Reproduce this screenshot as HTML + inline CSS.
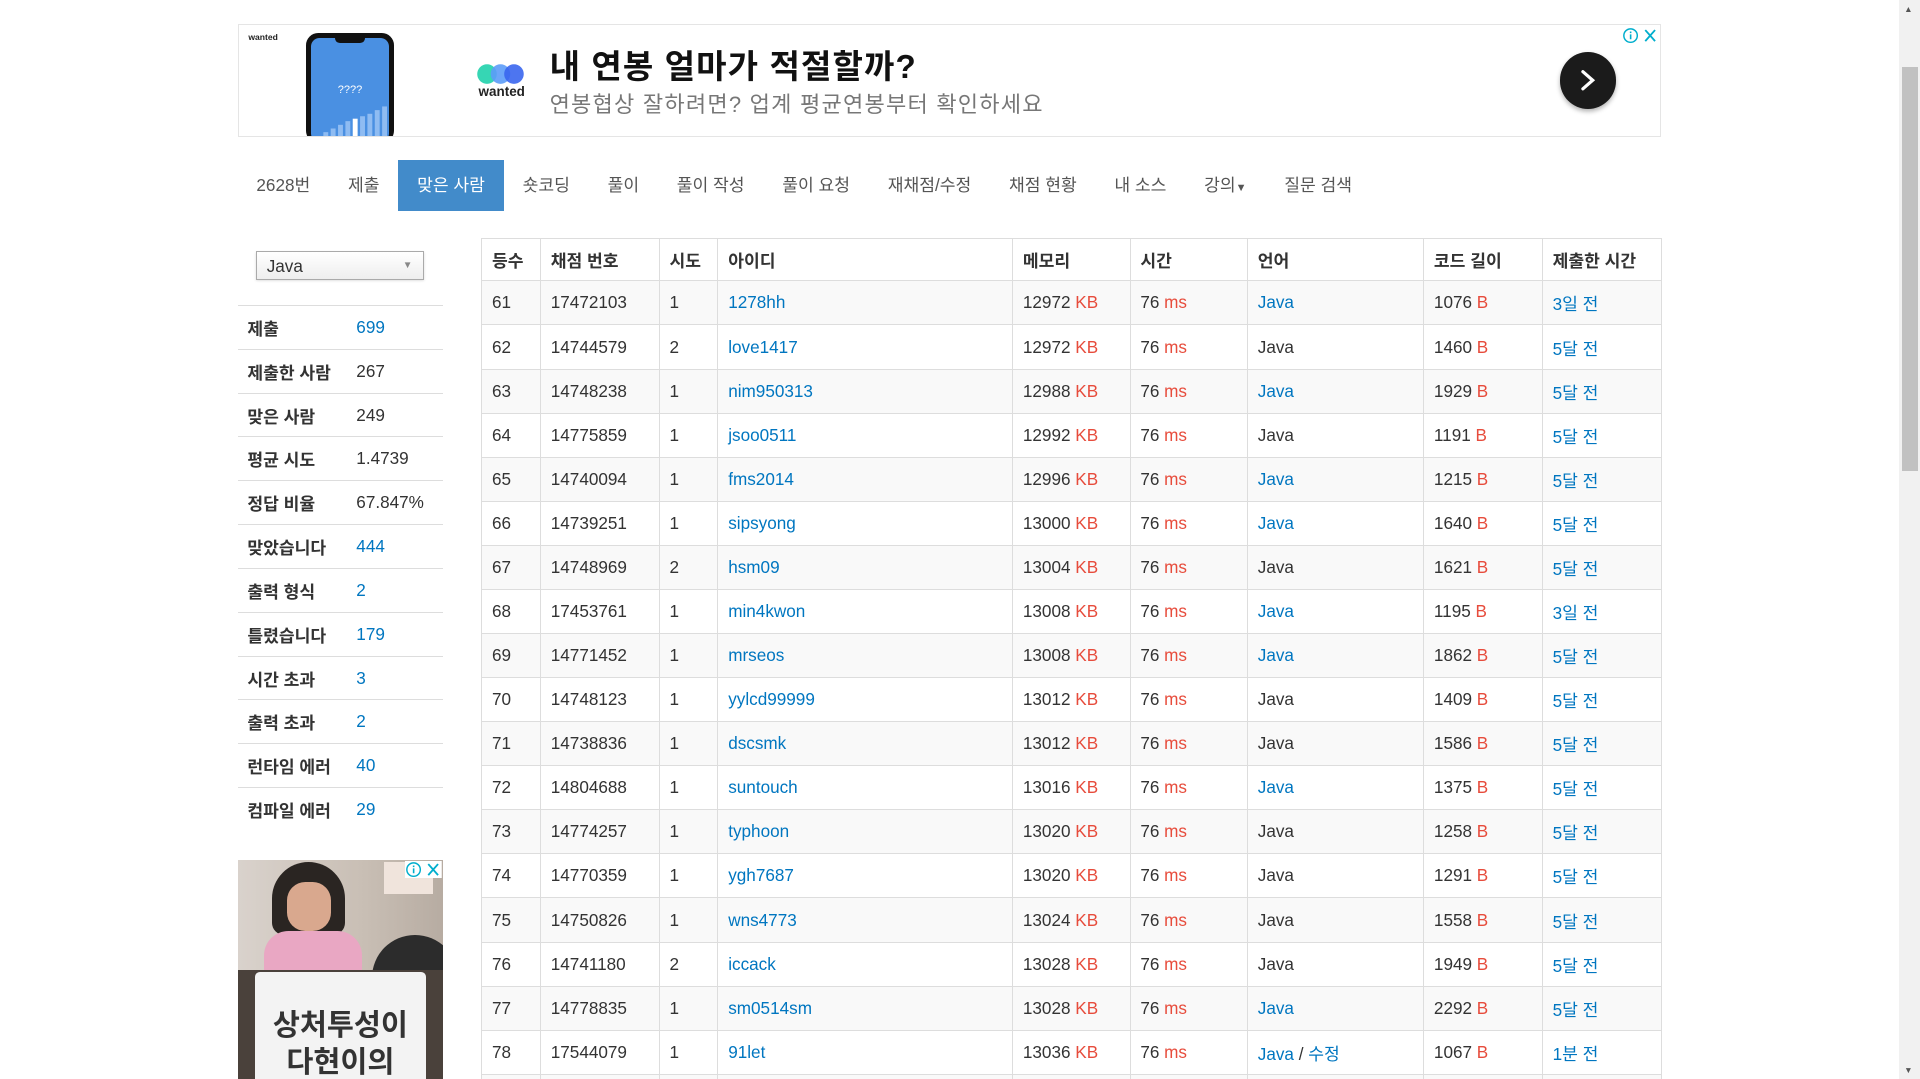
<!DOCTYPE html>
<html><head><meta charset="utf-8">
<style>
html,body{margin:0;padding:0;background:#fff;overflow:hidden;width:1920px;height:1079px}
#w{zoom:1.22449;width:1568px;height:881px;position:relative;font-family:"Liberation Sans","Noto Sans CJK KR",sans-serif;font-size:14px;color:#333}
a{color:#0076c0;text-decoration:none}
.r{color:#e74c3c}
.abs{position:absolute}
#ad{left:194px;top:20px;width:1161px;height:90px;border:1px solid #e5e5e5;background:#fff;overflow:hidden}
#nav{left:194px;top:131px;height:41px;display:flex}
#nav div{padding:0 15.4px;line-height:42px;font-size:14px;color:#555}
#nav div.act{background:#428bca;color:#fff}
#side{left:194px;top:249px;width:168px}
#side .row{height:35px;border-top:1px solid #ddd;display:flex;align-items:center}
#side .l{width:89px;padding-left:8px;font-weight:bold;color:#333}
table{border-collapse:collapse;position:absolute;left:393px;top:194px;width:964px}
td,th{border:1px solid #ddd;padding:0 8px;text-align:left;font-size:14px;white-space:nowrap}
tbody tr{height:36px}
thead tr{height:35px}
th{font-weight:bold}
tbody tr:nth-child(odd){background:#f9f9f9}
#sb{left:1551px;top:0;width:17px;height:881px;background:#f1f1f1}
</style></head><body><div id="w">
<div id="ad" class="abs">
 <div class="abs" style="left:8px;top:5px;font-size:7px;font-weight:bold;color:#222">wanted</div>
 <div class="abs" style="left:55px;top:6px;width:72px;height:90px;background:#111;border-radius:10px"></div>
 <div class="abs" style="left:59px;top:10px;width:64px;height:85px;background:#4a90e2;border-radius:7px">
  <div class="abs" style="left:20px;top:-4px;width:24px;height:8px;background:#111;border-radius:4px"></div>
  <div class="abs" style="left:22px;top:38px;color:#fff;font-size:9px">????</div>
  <svg class="abs" style="left:4px;top:54px" width="58" height="31"><g fill="#8fbcf2"><rect x="0" y="26" width="4" height="5"/><rect x="6" y="23" width="4" height="8"/><rect x="12" y="20" width="4" height="11"/><rect x="18" y="17" width="4" height="14"/><rect x="24" y="14" width="4" height="17"/><rect x="36" y="10" width="4" height="21"/><rect x="42" y="8" width="4" height="23"/><rect x="48" y="5" width="4" height="26"/><rect x="54" y="2" width="4" height="29"/></g><rect x="30" y="12" width="4" height="19" fill="#fff"/></svg>
 </div>
 <svg class="abs" style="left:194px;top:31px" width="42" height="18"><circle cx="9" cy="9" r="8" fill="#36d6b4"/><circle cx="20" cy="9" r="8" fill="#5c9cf8" opacity=".9"/><circle cx="31" cy="9" r="8" fill="#3a66ee" opacity=".9"/></svg>
 <div class="abs" style="left:196px;top:48px;font-size:11px;font-weight:bold;color:#222">wanted</div>
 <div class="abs" style="left:254px;top:12px;font-size:27px;font-weight:bold;color:#111;letter-spacing:0.9px">내 연봉 얼마가 적절할까?</div>
 <div class="abs" style="left:254px;top:50px;font-size:18px;color:#777;letter-spacing:1px">연봉협상 잘하려면? 업계 평균연봉부터 확인하세요</div>
 <div class="abs" style="left:1079px;top:22px;width:46px;height:46px;border-radius:50%;background:#1b1b1b;box-shadow:0 2px 4px rgba(0,0,0,.3)"></div>
 <svg class="abs" style="left:1094px;top:35px" width="16" height="20"><path d="M4 3 L12 10 L4 17" stroke="#fff" stroke-width="2.6" fill="none" stroke-linecap="round"/></svg>
 <svg class="abs" style="left:1130px;top:1px" width="30" height="14"><circle cx="7" cy="7" r="5.5" fill="none" stroke="#00aecd" stroke-width="1.2"/><rect x="6.4" y="6" width="1.3" height="4" fill="#00aecd"/><rect x="6.4" y="3.7" width="1.3" height="1.3" fill="#00aecd"/><path d="M19 2.5 L27 11.5 M27 2.5 L19 11.5" stroke="#00aecd" stroke-width="1.5"/></svg>
</div>
<div id="nav" class="abs"><div>2628번</div><div>제출</div><div class="act">맞은 사람</div><div>숏코딩</div><div>풀이</div><div>풀이 작성</div><div>풀이 요청</div><div>재채점/수정</div><div>채점 현황</div><div>내 소스</div><div>강의<span style="font-size:9px">▼</span></div><div>질문 검색</div></div>
<div class="abs" style="left:209px;top:205px;height:22px;border:1px solid #aaa;background:linear-gradient(#fff,#eee);box-shadow:0 1px 2px rgba(0,0,0,.15);font-size:14px;line-height:23px;padding-left:8px;width:128px">Java<span style="position:absolute;right:9px;font-size:8px;color:#888">▼</span></div>
<div id="side" class="abs">
<div class="row"><span class="l">제출</span><a>699</a></div>
<div class="row"><span class="l">제출한 사람</span>267</div>
<div class="row"><span class="l">맞은 사람</span>249</div>
<div class="row"><span class="l">평균 시도</span>1.4739</div>
<div class="row"><span class="l">정답 비율</span>67.847%</div>
<div class="row"><span class="l">맞았습니다</span><a>444</a></div>
<div class="row"><span class="l">출력 형식</span><a>2</a></div>
<div class="row"><span class="l">틀렸습니다</span><a>179</a></div>
<div class="row"><span class="l">시간 초과</span><a>3</a></div>
<div class="row"><span class="l">출력 초과</span><a>2</a></div>
<div class="row"><span class="l">런타임 에러</span><a>40</a></div>
<div class="row"><span class="l">컴파일 에러</span><a>29</a></div>
</div>
<div class="abs" style="left:194px;top:702px;width:168px;height:179px;overflow:hidden;background:#cfc7c1">
 <div class="abs" style="left:0;top:0;width:168px;height:90px;background:linear-gradient(90deg,#d9d2cc,#c9bfb5 60%,#b7aca2)"></div>
 <div class="abs" style="left:28px;top:2px;width:60px;height:60px;border-radius:30px 30px 10px 10px;background:#2a2522"></div>
 <div class="abs" style="left:40px;top:18px;width:36px;height:40px;border-radius:15px;background:#d9a88e"></div>
 <div class="abs" style="left:22px;top:58px;width:80px;height:40px;border-radius:20px 20px 0 0;background:#e9a7c3"></div>
 <div class="abs" style="left:110px;top:62px;width:70px;height:70px;border-radius:50%;background:#2c2c2c"></div>
 <div class="abs" style="left:120px;top:2px;width:40px;height:26px;background:#f0e4dc"></div>
 <div class="abs" style="left:0;top:90px;width:168px;height:89px;background:#4a413b"></div>
 <div class="abs" style="left:14px;top:92px;width:140px;height:100px;border-radius:4px;background:#f3f3f3"></div>
 <div class="abs" style="left:14px;top:120px;width:140px;text-align:center;font-size:24px;font-weight:bold;color:#333;line-height:31px">상처투성이<br>다현이의</div>
 <svg class="abs" style="left:137px;top:1px" width="30" height="14"><rect width="30" height="14" fill="#fff"/><circle cx="7" cy="7" r="5.5" fill="none" stroke="#00aecd" stroke-width="1.2"/><rect x="6.4" y="6" width="1.3" height="4" fill="#00aecd"/><rect x="6.4" y="3.7" width="1.3" height="1.3" fill="#00aecd"/><path d="M19 2.5 L27 11.5 M27 2.5 L19 11.5" stroke="#00aecd" stroke-width="1.5"/></svg>
</div>
<table>
<colgroup><col style="width:48px"><col style="width:97px"><col style="width:48px"><col style="width:241px"><col style="width:96px"><col style="width:96px"><col style="width:144px"><col style="width:97px"><col style="width:97px"></colgroup>
<thead><tr><th>등수</th><th>채점 번호</th><th>시도</th><th>아이디</th><th>메모리</th><th>시간</th><th>언어</th><th>코드 길이</th><th>제출한 시간</th></tr></thead>
<tbody>
<tr><td>61</td><td>17472103</td><td>1</td><td><a>1278hh</a></td><td>12972 <span class="r">KB</span></td><td>76 <span class="r">ms</span></td><td><a>Java</a></td><td>1076 <span class="r">B</span></td><td><a>3일 전</a></td></tr>
<tr><td>62</td><td>14744579</td><td>2</td><td><a>love1417</a></td><td>12972 <span class="r">KB</span></td><td>76 <span class="r">ms</span></td><td>Java</td><td>1460 <span class="r">B</span></td><td><a>5달 전</a></td></tr>
<tr><td>63</td><td>14748238</td><td>1</td><td><a>nim950313</a></td><td>12988 <span class="r">KB</span></td><td>76 <span class="r">ms</span></td><td><a>Java</a></td><td>1929 <span class="r">B</span></td><td><a>5달 전</a></td></tr>
<tr><td>64</td><td>14775859</td><td>1</td><td><a>jsoo0511</a></td><td>12992 <span class="r">KB</span></td><td>76 <span class="r">ms</span></td><td>Java</td><td>1191 <span class="r">B</span></td><td><a>5달 전</a></td></tr>
<tr><td>65</td><td>14740094</td><td>1</td><td><a>fms2014</a></td><td>12996 <span class="r">KB</span></td><td>76 <span class="r">ms</span></td><td><a>Java</a></td><td>1215 <span class="r">B</span></td><td><a>5달 전</a></td></tr>
<tr><td>66</td><td>14739251</td><td>1</td><td><a>sipsyong</a></td><td>13000 <span class="r">KB</span></td><td>76 <span class="r">ms</span></td><td><a>Java</a></td><td>1640 <span class="r">B</span></td><td><a>5달 전</a></td></tr>
<tr><td>67</td><td>14748969</td><td>2</td><td><a>hsm09</a></td><td>13004 <span class="r">KB</span></td><td>76 <span class="r">ms</span></td><td>Java</td><td>1621 <span class="r">B</span></td><td><a>5달 전</a></td></tr>
<tr><td>68</td><td>17453761</td><td>1</td><td><a>min4kwon</a></td><td>13008 <span class="r">KB</span></td><td>76 <span class="r">ms</span></td><td><a>Java</a></td><td>1195 <span class="r">B</span></td><td><a>3일 전</a></td></tr>
<tr><td>69</td><td>14771452</td><td>1</td><td><a>mrseos</a></td><td>13008 <span class="r">KB</span></td><td>76 <span class="r">ms</span></td><td><a>Java</a></td><td>1862 <span class="r">B</span></td><td><a>5달 전</a></td></tr>
<tr><td>70</td><td>14748123</td><td>1</td><td><a>yylcd99999</a></td><td>13012 <span class="r">KB</span></td><td>76 <span class="r">ms</span></td><td>Java</td><td>1409 <span class="r">B</span></td><td><a>5달 전</a></td></tr>
<tr><td>71</td><td>14738836</td><td>1</td><td><a>dscsmk</a></td><td>13012 <span class="r">KB</span></td><td>76 <span class="r">ms</span></td><td>Java</td><td>1586 <span class="r">B</span></td><td><a>5달 전</a></td></tr>
<tr><td>72</td><td>14804688</td><td>1</td><td><a>suntouch</a></td><td>13016 <span class="r">KB</span></td><td>76 <span class="r">ms</span></td><td><a>Java</a></td><td>1375 <span class="r">B</span></td><td><a>5달 전</a></td></tr>
<tr><td>73</td><td>14774257</td><td>1</td><td><a>typhoon</a></td><td>13020 <span class="r">KB</span></td><td>76 <span class="r">ms</span></td><td>Java</td><td>1258 <span class="r">B</span></td><td><a>5달 전</a></td></tr>
<tr><td>74</td><td>14770359</td><td>1</td><td><a>ygh7687</a></td><td>13020 <span class="r">KB</span></td><td>76 <span class="r">ms</span></td><td>Java</td><td>1291 <span class="r">B</span></td><td><a>5달 전</a></td></tr>
<tr><td>75</td><td>14750826</td><td>1</td><td><a>wns4773</a></td><td>13024 <span class="r">KB</span></td><td>76 <span class="r">ms</span></td><td>Java</td><td>1558 <span class="r">B</span></td><td><a>5달 전</a></td></tr>
<tr><td>76</td><td>14741180</td><td>2</td><td><a>iccack</a></td><td>13028 <span class="r">KB</span></td><td>76 <span class="r">ms</span></td><td>Java</td><td>1949 <span class="r">B</span></td><td><a>5달 전</a></td></tr>
<tr><td>77</td><td>14778835</td><td>1</td><td><a>sm0514sm</a></td><td>13028 <span class="r">KB</span></td><td>76 <span class="r">ms</span></td><td><a>Java</a></td><td>2292 <span class="r">B</span></td><td><a>5달 전</a></td></tr>
<tr><td>78</td><td>17544079</td><td>1</td><td><a>91let</a></td><td>13036 <span class="r">KB</span></td><td>76 <span class="r">ms</span></td><td><a>Java</a> / <a>수정</a></td><td>1067 <span class="r">B</span></td><td><a>1분 전</a></td></tr>
<tr><td>79</td><td>14750000</td><td>1</td><td><a>user</a></td><td>13040 <span class="r">KB</span></td><td>76 <span class="r">ms</span></td><td>Java</td><td>1200 <span class="r">B</span></td><td><a>5달 전</a></td></tr>
</tbody></table>
<div id="sb" class="abs"><div class="abs" style="left:2px;top:55px;width:13px;height:330px;background:#c1c1c1"></div>
<div class="abs" style="left:4px;top:3px;font-size:7px;color:#555">▲</div><div class="abs" style="left:4px;top:870px;font-size:7px;color:#555">▼</div></div>
</div></body></html>
